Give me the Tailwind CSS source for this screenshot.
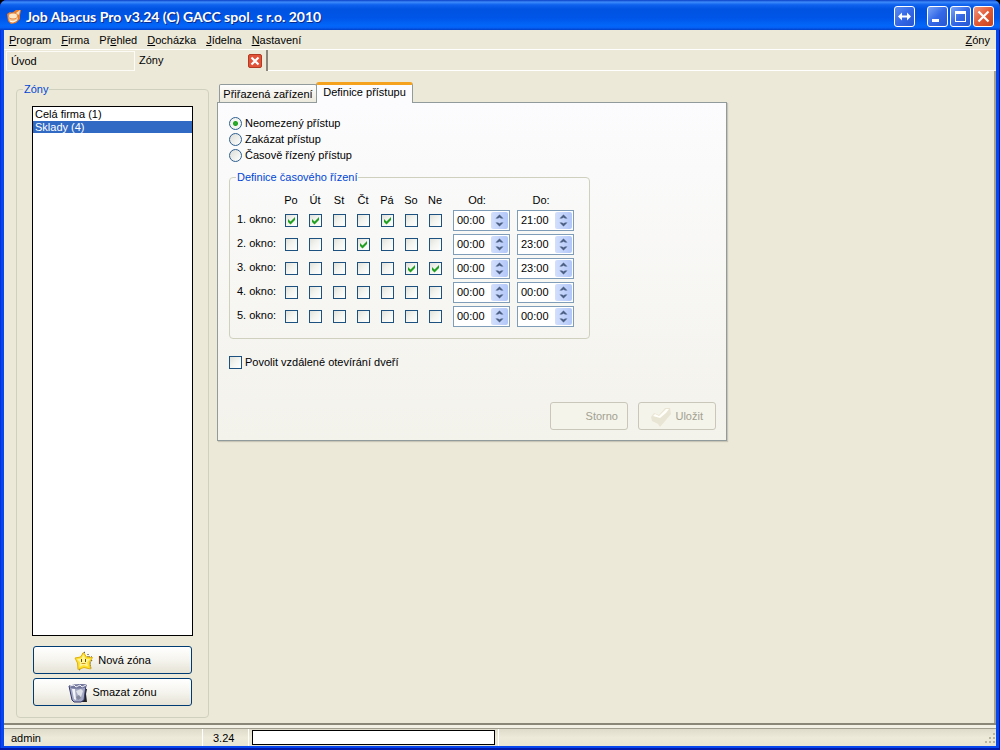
<!DOCTYPE html>
<html lang="cs">
<head>
<meta charset="utf-8">
<title>Job Abacus Pro</title>
<script src="https://cdn.jsdelivr.net/npm/@tailwindcss/browser@4"></script>
</head>
<body class="h-screen flex flex-col overflow-hidden bg-black font-['Liberation_Sans',Arial,sans-serif] text-[11px] leading-[13px] text-black">
<div class="flex-1 min-h-0 flex flex-col overflow-hidden rounded-t-[7px] bg-[#0646ee] shadow-[inset_-1px_-2px_0_#0019a8,inset_1px_0_0_#0831d9]">

<header class="h-[30px] shrink-0 flex items-center pl-[6px] pr-[6px] pt-[3px] bg-[linear-gradient(180deg,#0a3fc8_0%,#3d8bfa_7%,#0f62ee_16%,#0053e1_30%,#0055e8_60%,#0366fa_85%,#0560f5_92%,#0040c8_100%)]">
  <svg class="size-4 shrink-0" viewBox="0 0 16 16" aria-hidden="true">
    <path d="M1 5 4 3 6 4 10 1 15 1 14 6 14 10 10 14 5 15 2 12Z" fill="#e87a28"/>
    <path d="M2 7C3 4 11 3 12 6L12 10C10 14 4 15 3 11Z" fill="#f9c793"/>
    <ellipse cx="7" cy="7" rx="4.500" ry="3" fill="#ffe6c4" stroke="#e08848"/>
    <path d="M10 4 14 1 13 6Z" fill="#ffe0bb"/>
    <path d="M4 12 7 13 11 11" fill="none" stroke="#fff" />
  </svg>
  <h1 class="ml-1 font-['Lato','Open_Sans',sans-serif] text-[14px] leading-[18px] font-bold text-white [text-shadow:1px_1px_0_#0a2c8c]">Job Abacus Pro v3.24 (C) GACC spol. s r.o. 2010</h1>
  <div class="ml-auto flex gap-[2px]">
    <button aria-label="Přesunout" class="mr-[10px] size-[21px] rounded-[3px] border border-white bg-linear-to-br from-[#5b8cf0] via-[#3468e6] to-[#2656d4]">
      <svg viewBox="0 0 19 19" class="size-[19px]"><path d="M3 9.500 7 5.500V8.500H12V5.500L16 9.500 12 13.500V10.500H7V13.500Z" fill="#fff"/></svg></button>
    <button aria-label="Minimalizovat" class="size-[21px] rounded-[3px] border border-white bg-linear-to-br from-[#7ba4f6] via-[#3468e6] to-[#2656d4]">
      <svg viewBox="0 0 19 19" class="size-[19px]"><path d="M4 12h7v3H4z" fill="#fff"/></svg></button>
    <button aria-label="Maximalizovat" class="size-[21px] rounded-[3px] border border-white bg-linear-to-br from-[#7ba4f6] via-[#3468e6] to-[#2656d4]">
      <svg viewBox="0 0 19 19" class="size-[19px]"><path d="M4 4h11v11H4zM5 7v7h9V7z" fill="#fff" fill-rule="evenodd"/></svg></button>
    <button aria-label="Zavřít" class="size-[21px] rounded-[3px] border border-white bg-linear-to-br from-[#f0977c] via-[#e25a34] to-[#c8441c]">
      <svg viewBox="0 0 19 19" class="size-[19px]"><path d="M4.500 4.500 14.500 14.500M14.500 4.500 4.500 14.500" stroke="#fff" stroke-width="2.200"/></svg></button>
  </div>
</header>

<div class="flex-1 min-h-0 flex flex-col mx-1 mb-[4px] bg-[#ece9d8]">
  <nav class="h-[20px] shrink-0 flex items-center gap-[10px] pt-[2px] pl-[5px] pr-[6px] border-b border-white">
    <a href="#"><u>P</u>rogram</a><a href="#"><u>F</u>irma</a><a href="#">Př<u>e</u>hled</a><a href="#"><u>D</u>ocházka</a><a href="#"><u>J</u>ídelna</a><a href="#"><u>N</u>astavení</a>
    <a href="#" class="ml-auto"><u>Z</u>óny</a>
  </nav>

  <div class="h-[21px] shrink-0 flex pl-[2px]">
    <button class="w-[129px] mt-px flex items-center pl-[4px] pt-px border border-[#fcfbf6]">Úvod</button>
    <div class="w-[133px] flex items-center justify-between pl-[4px] pr-[4px] border-r-2 border-[#8a877a]">
      <button>Zóny</button>
      <button aria-label="Zavřít záložku" class="size-[14px] mt-px rounded-[2px] border border-[#b23a22] bg-[#e25239]">
        <svg viewBox="0 0 12 12" class="size-3"><path d="M2.500 2.500 9.500 9.500M9.500 2.500 2.500 9.500" stroke="#fff" stroke-width="2.200"/></svg></button>
    </div>
    <div class="flex-1 border-b border-white"></div>
  </div>

  <main class="flex-1 min-h-0 flex items-start pl-3 pt-[12px] pb-[5px] border-r-2 border-[#a5a294]">
    <fieldset class="self-stretch w-[193px] flex flex-col rounded-[4px] border border-[#d0d0bf] px-[15px] pb-[11px]">
      <legend class="-ml-[9px] px-px text-[#0046d5]">Zóny</legend>
      <ul class="flex-1 mt-[10px] bg-white border border-black" role="listbox" aria-label="Zóny">
        <li role="option" class="pl-[2px] pt-px">Celá firma (1)</li>
        <li role="option" aria-selected="true" class="pl-[2px] leading-3 bg-[#316ac5] text-white">Sklady (4)</li>
      </ul>
      <button class="mt-[10px] mx-px h-7 pt-px shrink-0 flex items-center justify-center gap-1 rounded-[3px] border border-[#003c74] bg-linear-to-b from-white via-[#f5f4ee] to-[#e6e3d6]">
        <svg class="size-5" viewBox="0 0 20 20" aria-hidden="true"><path d="M11 1 8 3M14 3 14 6 19 6M18 9 16 12 17 18M5 19 7 18" fill="none" stroke="#222" stroke-dasharray="1 1"/><path d="M9.500 1.500 12.500 6 18.500 6.500 15.500 11.500 16.500 18 10 16.500 4 18.500 3.500 12 1 7 6.500 6Z" fill="#ffe02a" stroke="#e0b010" stroke-linejoin="round"/><path d="M9.500 3.500 11.500 8H16L13 11.500 14 15.500 9.500 14 5.500 16 6 11.500 3 8 7.500 7.500Z" fill="#fff39a"/><path d="M7 8h1v3H7zM11 8h1v3h-1z" fill="#655512"/><path d="M7.500 12.500h4" stroke="#d09a20"/></svg>
        Nová zóna</button>
      <button class="mt-1 mx-px h-7 pt-px shrink-0 flex items-center justify-center gap-1 rounded-[3px] border border-[#003c74] bg-linear-to-b from-white via-[#f5f4ee] to-[#e6e3d6]">
        <svg class="size-5" viewBox="0 0 20 20" aria-hidden="true"><path d="M14 6h5l-1 5 1 8H8Z" fill="#222"/><path d="M1 3 18 2 16 17 13 19H6L4 17Z" fill="#a3a8c4" stroke="#34386b"/><path d="M4 6 7 6 8 17 6 16Z" fill="#f4f5fa"/><path d="M8 8 13 6 15 8 13 14 10 12Z" fill="#dfe1e8"/><path d="M8 14 11 12 13 15 10 17Z" fill="#85899c"/><path d="M1 3C3 1 16 0 19 2L17 5C12 6 6 6 3 5Z" fill="#74789c"/><path d="M2 3 6 2 8 4 12 2 14 4 18 2" fill="none" stroke="#f0f1f8"/></svg>
        Smazat zónu</button>
    </fieldset>

    <section class="-mt-px ml-2 w-[510px]">
      <div class="flex items-end pl-[2px] h-[21px] -mb-px relative" role="tablist">
        <button role="tab" class="w-[98px] h-[18px] mb-px pt-px rounded-t-[2px] border border-b-0 border-[#919b9c] bg-linear-to-b from-[#fefefe] to-[#ece9dd]">Přiřazená zařízení</button>
        <button role="tab" aria-selected="true" class="w-[97px] h-[21px] -ml-px pb-[3px] rounded-t-[3px] border border-b-0 border-t-3 border-[#919b9c] border-t-[#f5a21e] bg-[#fcfcfe]">Definice přístupu</button>
      </div>
      <div class="border border-[#919b9c] shadow-[1px_1px_1px_#c9c6b8] bg-linear-to-b from-[#fcfcfe] to-[#f3f2eb] pl-[11px] pr-[10px] pt-3 pb-[10px]">
        <div id="access"></div>
        <fieldset class="mt-[8px] w-[361px] h-[168px] rounded-[4px] border border-[#d0d0bf] pl-[7px]">
          <legend class="-ml-px px-px text-[#0046d5]">Definice časového řízení</legend>
          <table class="mt-[8px] w-[338px] table-fixed border-collapse">
            <thead><tr id="days" class="h-[16px]"></tr></thead>
            <tbody id="rows"></tbody>
          </table>
        </fieldset>
        <label class="mt-[17px] flex items-center gap-[3px]"><input type="checkbox" class="appearance-none size-[13px] border border-[#1c5180] bg-linear-to-br from-[#e2e2dc] via-[#f4f4f1] to-white">Povolit vzdálené otevírání dveří</label>
        <div class="mt-[33px] flex justify-end gap-[10px]">
          <button disabled class="w-[78px] h-7 pt-px pr-[9px] text-right rounded-[3px] border border-[#c9c7ba] bg-[#f5f4ea] text-[#a1a192]">Storno</button>
          <button disabled class="w-[78px] h-7 pt-px pr-[12px] flex items-center justify-end gap-1 rounded-[3px] border border-[#c9c7ba] bg-[#f5f4ea] text-[#a1a192]">
            <svg class="size-5" viewBox="0 0 20 20" aria-hidden="true"><path d="M0 10 3 6 8 8 14 1 19 1 20 7 15 13 9 20 7 17 1 14Z" fill="#e9e5d4"/><path d="M2 9 4 7 8 9 15 2 18 2 15 6 9 11Z" fill="#fffef8"/></svg>Uložit</button>
        </div>
      </div>
    </section>
  </main>

  <footer class="h-[23px] shrink-0 flex flex-col">
    <div class="h-[6px] shrink-0 border-t-2 border-b border-t-[#8a8778] border-b-[#a19e90] bg-[#f3f1e6]"></div>
    <div class="flex-1 flex items-stretch bg-linear-to-b from-[#dedbca] via-[#edeada] to-[#e8e5d4]">
      <span class="w-[199px] pl-[7px] pt-[3px] border-r border-white">admin</span>
      <span class="w-[46px] pt-[3px] pl-[10px] border-r border-white">3.24</span>
      <input aria-label="Stav" class="ml-[3px] w-[243px] h-[15px] mt-px bg-white border border-black">
      <span class="ml-[3px] border-l border-white"></span>
      <svg class="ml-auto mt-[3px] size-3" viewBox="0 0 12 12" aria-hidden="true"><path d="M9 1h2v2H9zM5 5h2v2H5zM9 5h2v2H9zM1 9h2v2H1zM5 9h2v2H5zM9 9h2v2H9z" fill="#b8b4a2"/></svg>
    </div>
  </footer>
</div>
</div>

<script>
const days = ['Po', 'Út', 'St', 'Čt', 'Pá', 'So', 'Ne'];
const windows = [
  { on: [0, 1, 4], from: '00:00', to: '21:00' },
  { on: [3], from: '00:00', to: '23:00' },
  { on: [5, 6], from: '00:00', to: '23:00' },
  { on: [], from: '00:00', to: '00:00' },
  { on: [], from: '00:00', to: '00:00' },
];
document.getElementById('access').innerHTML = ['Neomezený přístup', 'Zakázat přístup', 'Časově řízený přístup'].map((t, i) =>
  `<label class="flex items-center gap-[3px] h-4"><input type="radio" name="access" ${i ? '' : 'checked'} class="appearance-none size-[13px] rounded-full border border-[#2c5f90] bg-[linear-gradient(135deg,#dcdcd7,#ffffff)] checked:bg-[radial-gradient(circle,#2fb02f_0px,#21a121_2px,#f4f4f0_3px)]">${t}</label>`).join('');
document.getElementById('days').innerHTML = '<td class="w-[42px]"></td>' +
  days.map(d => `<th class="w-6 p-0 font-normal">${d}</th>`).join('') +
  ['Od:', 'Do:'].map(d => `<th class="w-16 p-0 pr-[4px] font-normal">${d}</th>`).join('');
const spin = (v, name) => `<td class="p-0 pl-[6px]"><div class="w-[57px] h-[21px] flex bg-white border border-[#7f9db9] p-px">
  <input aria-label="${name}" value="${v}" class="w-9 pl-[2px] min-w-0">
  <div class="w-[17px] flex flex-col rounded-[2px] bg-linear-to-r from-[#d3dffc] to-[#b2c7f8]">
    <button aria-label="Zvýšit" class="flex-1"><svg viewBox="0 0 17 8" class="w-[17px] h-2"><path d="M4.500 6.500 8.500 2.500 12.500 6.500H10L8.500 5.500 7 6.500Z" fill="#4d6185"/></svg></button>
    <button aria-label="Snížit" class="flex-1"><svg viewBox="0 0 17 8" class="w-[17px] h-2"><path d="M4.500 2.500 8.500 6.500 12.500 2.500H10L8.500 3.500 7 2.500Z" fill="#4d6185"/></svg></button>
  </div></div></td>`;
document.getElementById('rows').innerHTML = windows.map((w, r) => `<tr class="h-6"><th scope="row" class="p-0 pb-[2px] font-normal text-left whitespace-nowrap">${r + 1}. okno:</th>` +
  days.map((d, i) => `<td class="p-0"><label class="relative block size-[13px] mx-auto"><input type="checkbox" aria-label="${r + 1}. okno ${d}" ${w.on.includes(i) ? 'checked' : ''} class="peer block appearance-none size-[13px] border border-[#1c5180] bg-linear-to-br from-[#e2e2dc] via-[#f4f4f1] to-white"><svg viewBox="0 0 13 13" class="absolute inset-0 size-[13px] hidden peer-checked:block"><path d="M3 5V8L5.500 10.500 10 6V3L5.500 7.500Z" fill="#21a121"/></svg></label></td>`).join('') +
  spin(w.from, `${r + 1}. okno od`) + spin(w.to, `${r + 1}. okno do`) + '</tr>').join('');
</script>
</body>
</html>
